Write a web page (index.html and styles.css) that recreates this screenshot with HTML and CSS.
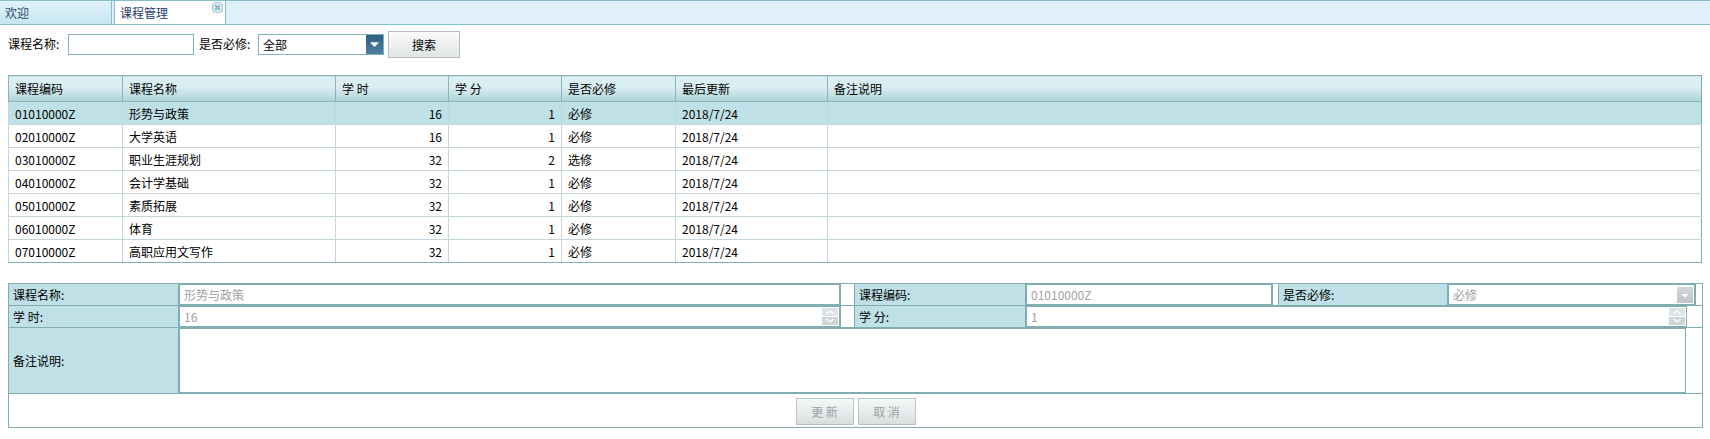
FILE: index.html
```html
<!DOCTYPE html>
<html lang="zh-CN">
<head>
<meta charset="utf-8">
<title>课程管理</title>
<link rel="stylesheet" href="styles.css">
</head>
<body>
<div class="tabbar">
  <div class="tab">欢迎</div>
  <div class="tab active">课程管理
    <svg class="tab-close" width="11" height="11" viewBox="0 0 11 11"><rect x="0.5" y="0.5" width="10" height="10" rx="3" fill="#d3e9ef" stroke="#a5cbd4"/><path d="M3.2 3.2L7.8 7.8M7.8 3.2L3.2 7.8" stroke="#86b0bb" stroke-width="1.6"/></svg>
  </div>
</div>

<div class="search">
  <span class="s-label">课程名称:</span>
  <span class="s-input"></span>
  <span class="s-label s-label2">是否必修:</span>
  <span class="s-select">全部
    <svg class="s-arrow" width="17" height="19" viewBox="0 0 17 19"><defs><linearGradient id="ga" x1="0" y1="0" x2="0" y2="1"><stop offset="0" stop-color="#2f5f84"/><stop offset="1" stop-color="#4b7fa2"/></linearGradient></defs><rect x="0" y="0" width="17" height="19" fill="url(#ga)"/><path d="M4.5 8H12.5L8.5 12Z" fill="#fff"/><rect x="4.5" y="7" width="8" height="1" fill="#cfe0ea"/></svg>
  </span>
  <span class="s-btn">搜索</span>
</div>

<table class="grid">
  <colgroup>
    <col style="width:114px"><col style="width:213px"><col style="width:113px"><col style="width:113px"><col style="width:114px"><col style="width:152px"><col>
  </colgroup>
  <thead>
    <tr><th>课程编码</th><th>课程名称</th><th>学 时</th><th>学 分</th><th>是否必修</th><th>最后更新</th><th>备注说明</th></tr>
  </thead>
  <tbody>
    <tr class="selected"><td>01010000Z</td><td>形势与政策</td><td class="num">16</td><td class="num">1</td><td>必修</td><td>2018/7/24</td><td></td></tr>
    <tr><td>02010000Z</td><td>大学英语</td><td class="num">16</td><td class="num">1</td><td>必修</td><td>2018/7/24</td><td></td></tr>
    <tr><td>03010000Z</td><td>职业生涯规划</td><td class="num">32</td><td class="num">2</td><td>选修</td><td>2018/7/24</td><td></td></tr>
    <tr><td>04010000Z</td><td>会计学基础</td><td class="num">32</td><td class="num">1</td><td>必修</td><td>2018/7/24</td><td></td></tr>
    <tr><td>05010000Z</td><td>素质拓展</td><td class="num">32</td><td class="num">1</td><td>必修</td><td>2018/7/24</td><td></td></tr>
    <tr><td>06010000Z</td><td>体育</td><td class="num">32</td><td class="num">1</td><td>必修</td><td>2018/7/24</td><td></td></tr>
    <tr><td>07010000Z</td><td>高职应用文写作</td><td class="num">32</td><td class="num">1</td><td>必修</td><td>2018/7/24</td><td></td></tr>
  </tbody>
</table>

<table class="form">
  <colgroup>
    <col style="width:170px"><col style="width:662px"><col style="width:14px"><col style="width:171px"><col style="width:247px"><col style="width:6px"><col style="width:169px"><col style="width:248px"><col style="width:7px">
  </colgroup>
  <tr class="r1">
    <td class="lbl">课程名称:</td>
    <td class="fld"><div class="inp">形势与政策</div></td>
    <td class="gap"></td>
    <td class="lbl">课程编码:</td>
    <td class="fld"><div class="inp">01010000Z</div></td>
    <td class="gap"></td>
    <td class="lbl">是否必修:</td>
    <td class="fld"><div class="inp">必修
      <svg class="sel-arrow" width="16" height="16" viewBox="0 0 16 16"><defs><linearGradient id="gb" x1="0" y1="0" x2="0" y2="1"><stop offset="0" stop-color="#d2d9dc"/><stop offset="1" stop-color="#bcc6ca"/></linearGradient></defs><rect x="0" y="0" width="16" height="16" fill="url(#gb)"/><path d="M4.5 7H11.5L8 10.5Z" fill="#fff"/></svg>
    </div></td>
    <td class="gap"></td>
  </tr>
  <tr class="r2">
    <td class="lbl">学 时:</td>
    <td class="fld"><div class="inp">16
      <svg class="spin" width="16" height="17" viewBox="0 0 16 17"><rect x="0" y="0" width="16" height="8" fill="#dde3e6"/><rect x="0" y="9" width="16" height="8" fill="#cdd5d9"/><path d="M4.5 6L8 3L11.5 6M4.5 11L8 14L11.5 11" fill="none" stroke="#fff" stroke-width="1.3"/></svg>
    </div></td>
    <td class="gap"></td>
    <td class="lbl">学 分:</td>
    <td class="fld" colspan="5"><div class="inp inp-wide">1
      <svg class="spin" width="16" height="17" viewBox="0 0 16 17"><rect x="0" y="0" width="16" height="8" fill="#dde3e6"/><rect x="0" y="9" width="16" height="8" fill="#cdd5d9"/><path d="M4.5 6L8 3L11.5 6M4.5 11L8 14L11.5 11" fill="none" stroke="#fff" stroke-width="1.3"/></svg>
    </div></td>
  </tr>
  <tr class="r3">
    <td class="lbl">备注说明:</td>
    <td class="fld" colspan="8"><div class="area"></div></td>
  </tr>
  <tr class="r4">
    <td class="btns" colspan="9"><span class="btn">更 新</span><span class="btn">取 消</span></td>
  </tr>
</table>
</body>
</html>
```
FILE: styles.css
```css
* { box-sizing: border-box; }

body {
  margin: 0;
  font-family: "Noto Sans CJK SC", "Microsoft YaHei", sans-serif;
  font-size: 12px;
  color: #000;
  background: #fff;
}

/* tab bar */
.tabbar {
  height: 25px;
  border-top: 1px solid #86bfcc;
  border-bottom: 1px solid #86bfcc;
  background: #dff0f8;
  display: flex;
  gap: 2px;
}
.tab {
  position: relative;
  width: 112px;
  height: 23px;
  line-height: 23px;
  padding-left: 5px;
  border-right: 1px solid #86bfcc;
  color: #2c4a68;
  background: linear-gradient(#e2f2f9, #c5e6f2);
}
.tab.active {
  border-left: 1px solid #86bfcc;
  background: #fff;
  color: #1d3d6b;
}
.tab-close {
  position: absolute;
  right: 2px;
  top: 1px;
}

/* search row */
.search {
  display: flex;
  align-items: center;
  height: 26px;
  margin-top: 6px;
  padding-left: 8px;
}
.s-label {
  width: 60px;
  line-height: 20px;
}
.s-label2 {
  width: 59px;
  margin-left: 5px;
}
.s-input {
  width: 126px;
  height: 21px;
  border: 1px solid #7fb2bb;
  background: #fff;
}
.s-select {
  position: relative;
  width: 126px;
  height: 21px;
  line-height: 19px;
  padding-left: 4px;
  border: 1px solid #7fb2bb;
  background: #fff;
}
.s-arrow {
  position: absolute;
  right: 0;
  top: 0;
}
.s-btn {
  width: 72px;
  height: 27px;
  margin-left: 4px;
  line-height: 25px;
  text-align: center;
  border: 1px solid #b4bec1;
  background: linear-gradient(#fbfbfb, #dfe4e5);
  color: #000;
}

/* data grid */
.grid {
  margin: 18px 0 0 8px;
  width: 1694px;
  table-layout: fixed;
  border-collapse: collapse;
  border: 1px solid #7eaeb2;
}
.grid th {
  height: 26px;
  padding: 0 6px;
  text-align: left;
  font-weight: normal;
  white-space: nowrap;
  border: 1px solid #8db5b9;
  background: linear-gradient(#dcf0f4 0%, #d9eef2 42%, #aed4d9 100%);
}
.grid td {
  height: 23px;
  padding: 0 6px;
  white-space: nowrap;
  border: 1px solid #c4d6da;
}
.grid tbody tr:last-child td { border-bottom-color: #7eaeb2; }
.grid td:last-child, .grid th:last-child { border-right-color: #7eaeb2; }
.grid td.num { text-align: right; }
.grid tr.selected td { background: #bfe0e6; }

/* edit form */
.form {
  margin: 20px 0 0 8px;
  width: 1694px;
  table-layout: fixed;
  border-collapse: collapse;
  border: 1px solid #80adb1;
}
.form td {
  border: 1px solid #80adb1;
  padding: 0;
}
.form td.lbl {
  padding: 0 4px;
  background: #bfe0e6;
  white-space: nowrap;
}
.form .r1 td, .form .r2 td { height: 22px; }
.inp {
  position: relative;
  height: 21px;
  line-height: 19px;
  padding-left: 4px;
  border: 1px solid #80adb1;
  color: #a2a2a2;
  background: #fff;
}
.inp-wide { width: 661px; }
.sel-arrow {
  position: absolute;
  right: 1px;
  top: 2px;
}
.spin {
  position: absolute;
  right: 1px;
  top: 1px;
}
.form .r3 td { height: 66px; }
.area {
  width: 1507px;
  height: 65px;
  border: 1px solid #80adb1;
  background: #fff;
}
.form td.btns {
  height: 34px;
  text-align: center;
  padding-top: 1px;
}
.btn {
  display: inline-block;
  width: 58px;
  height: 27px;
  line-height: 25px;
  margin: 0 2px;
  text-align: center;
  vertical-align: middle;
  border: 1px solid #b8c3c5;
  background: linear-gradient(#f6f8f8, #d8dede);
  color: #9aa2a4;
}
```
